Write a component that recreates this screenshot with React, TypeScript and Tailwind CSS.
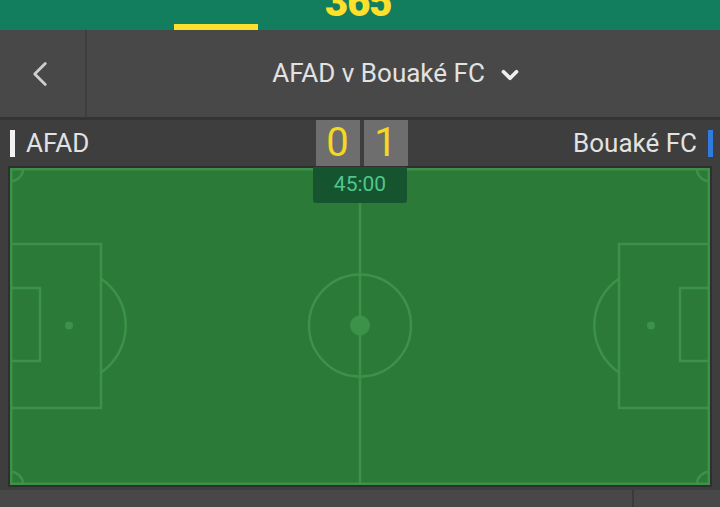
import { ChevronLeft, ChevronDown } from "lucide-react";

// ─── Pitch drawing ───────────────────────────────────────────────────────────

function Pitch() {
  const line = "#3c9248";
  return (
    <svg viewBox="0 0 700 317" className="block w-full h-full">
      <rect x="0" y="0" width="700" height="317" fill="#2c7a37" />
      <g fill="none" stroke={line} strokeWidth="2.5">
        <rect x="1.25" y="1.25" width="697.5" height="314.5" />
        <line x1="350" y1="0" x2="350" y2="317" />
        <circle cx="350" cy="157.5" r="51" />
        {/* left */}
        <rect x="-2" y="76" width="93" height="164" />
        <rect x="-2" y="120" width="32" height="73" />
        <path d="M 91 110.5 A 57 57 0 0 1 91 204.5" />
        {/* right */}
        <rect x="609" y="76" width="93" height="164" />
        <rect x="670" y="120" width="32" height="73" />
        <path d="M 609 110.5 A 57 57 0 0 0 609 204.5" />
        {/* corners */}
        <path d="M 1 13 A 12 12 0 0 0 13 1" />
        <path d="M 687 1 A 12 12 0 0 0 699 13" />
        <path d="M 1 304 A 12 12 0 0 1 13 316" />
        <path d="M 687 316 A 12 12 0 0 1 699 304" />
      </g>
      <g fill={line}>
        <circle cx="350" cy="157.5" r="10" />
        <circle cx="59" cy="157.5" r="4" />
        <circle cx="641" cy="157.5" r="4" />
      </g>
    </svg>
  );
}

export default function App() {
  return (
    <div
      className="w-[720px] h-[507px] overflow-hidden bg-[#3e3e3e] flex flex-col"
      style={{ fontFamily: "Roboto, 'Liberation Sans', sans-serif" }}
    >
      {/* Top brand bar */}
      <div className="relative h-[30px] shrink-0 bg-[#137e5e] overflow-hidden">
        <span className="absolute left-[325px] top-[-17px] text-[40px] leading-[40px] font-black text-[#fde02b] tracking-tight">
          365
        </span>
        <div className="absolute left-[174px] bottom-0 w-[84px] h-[6px] bg-[#fde02b]" />
      </div>

      {/* Match header */}
      <div className="h-[90px] shrink-0 bg-[#484848] flex border-b-[3px] border-[#343434]">
        <div className="w-[87px] shrink-0 flex items-center justify-center border-r-2 border-[#3d3d3d] pr-[6px]">
          <ChevronLeft size={42} strokeWidth={1.6} className="text-[#cfcfcf]" />
        </div>
        <div className="flex-1 flex items-center justify-center gap-[12px] pr-[12px]">
          <span className="text-[26px] text-[#e2e2e2]">AFAD v Bouaké FC</span>
          <ChevronDown size={26} strokeWidth={3.5} className="text-[#eeeeee] mt-[3px]" />
        </div>
      </div>

      {/* Score row */}
      <div className="h-[46px] shrink-0 flex items-center">
        <div className="flex-1 flex items-center gap-[11px] pl-[10px]">
          <span className="w-[5px] h-[27px] bg-[#f2f2f2]" />
          <span className="text-[26px] text-[#e2e2e2]">AFAD</span>
        </div>
        <div className="flex gap-[4px] self-stretch">
          <div className="w-[44px] bg-[#6e6e6e] flex items-center justify-center text-[40px] text-[#f5d81f]">0</div>
          <div className="w-[44px] bg-[#6e6e6e] flex items-center justify-center text-[40px] text-[#f5d81f]">1</div>
        </div>
        <div className="flex-1 flex items-center justify-end gap-[11px] pr-[7px]">
          <span className="text-[26px] text-[#e2e2e2]">Bouaké FC</span>
          <span className="w-[5px] h-[27px] bg-[#2f7be0]" />
        </div>
      </div>

      {/* Pitch */}
      <div className="relative mx-[8px] h-[321px] shrink-0 border-2 border-[#2f2f2f]">
        <Pitch />
        <div className="absolute left-[303px] top-[-1px] w-[94px] h-[36px] rounded-b-[3px] bg-[#165430] flex items-center justify-center text-[21px] text-[#4ec68e]">
          45:00
        </div>
      </div>

      {/* Bottom bar */}
      <div className="mt-[3px] flex-1 bg-[#484848] flex">
        <div className="w-[632px]" />
        <div className="w-[2px] bg-[#3a3a3a]" />
      </div>
    </div>
  );
}
